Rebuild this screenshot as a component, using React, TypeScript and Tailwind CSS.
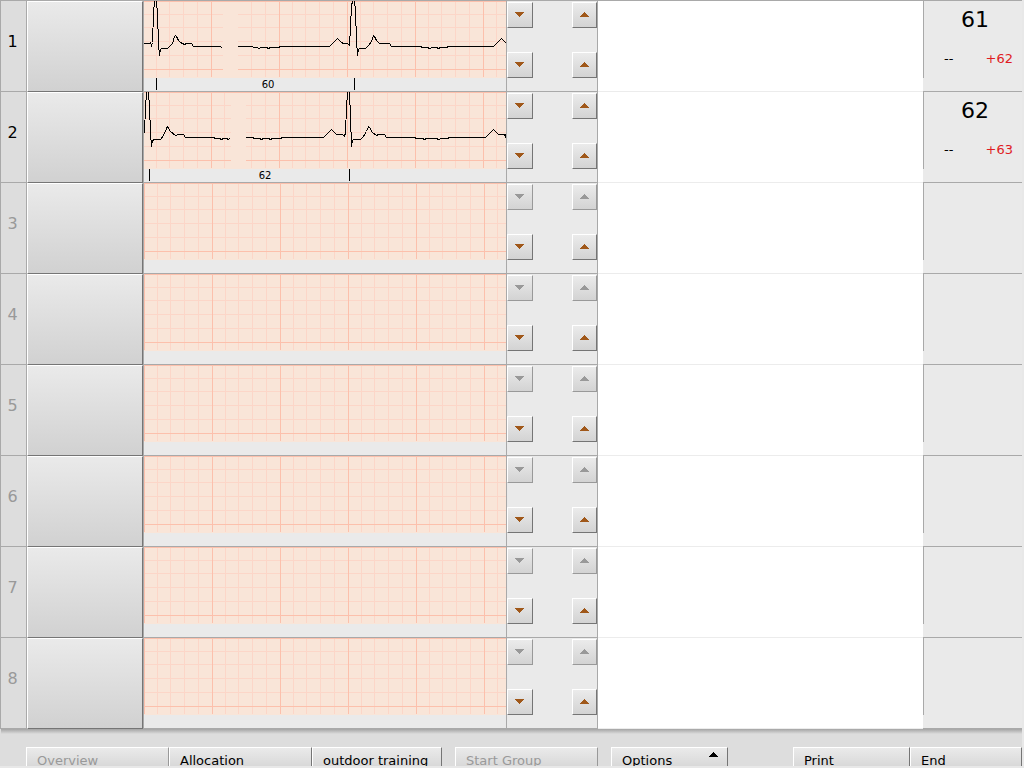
type Strip = {
  bpm: number;
  delta: string;
  rate: string;
  rateX: number;
  ticks: number[];
  gap: [number, number];
  trace: string;
};

type Channel = { id: number; strip?: Strip };

// Strip coordinates: 362 units wide, 90 high, one unit per pixel
const channels: Channel[] = [
  {
    id: 1,
    strip: {
      bpm: 61,
      delta: "+62",
      rate: "60",
      rateX: 124,
      ticks: [12, 210],
      gap: [79, 94],
      trace:
        "M0 42H5L6 41L7 44L8 41L9 12L10 0M12 0L13 12L14 42L15 54L16 48L17 47H23L25 45L28 42L30 35L31 34L32 35L34 39L36 41L40 43L42 42H47L49 45H76L77 46" +
        "M94 45H107L110 46H113L114 47L117 46H122L124 47L126 46H134L136 45H185L188 42L193 37L197 41L199 42H203L205 44L206 25L207 4L208 0M210 0L211 9L212 39L213 54L214 48L215 47H221L224 44L227 40L229 34L230 35L232 39L235 42H245L247 45H275L279 46H283L285 47L288 46H292L294 47L296 46H302L304 45H349L352 42L357 37L362 42",
    },
  },
  {
    id: 2,
    strip: {
      bpm: 62,
      delta: "+63",
      rate: "62",
      rateX: 121,
      ticks: [5, 205],
      gap: [87, 102],
      trace:
        "M0 40L1 15L2 0M4 0L5 15L6 40L7 54L8 48L10 47H16L19 43L23 34L26 39L31 43L34 42H39L41 45H69L71 46H75L77 47L79 46H82L84 47L85 46" +
        "M102 45H108L110 46H115L117 47L119 46H124L126 47L128 46H136L138 45H179L182 42L187 37L192 42H198L200 44L201 40L202 15L203 0M205 0L206 25L207 54L208 48L209 47H216L219 44L222 39L224 34L225 35L228 40L232 43L234 42H240L242 45H270L272 46H278L280 47L282 46H292L294 47L297 46H303L305 45H341L344 42L349 37L354 42H360L361 44L362 40",
    },
  },
  { id: 3 },
  { id: 4 },
  { id: 5 },
  { id: 6 },
  { id: 7 },
  { id: 8 },
];

const minorOffsets = [13, 26, 40, 54];
const majorColumns = [0, 68, 136, 204, 272, 340];

function Arrow({ up }: { up?: boolean }) {
  return (
    <svg width="9" height="5" viewBox="0 0 9 5" fill="currentColor" shapeRendering="crispEdges" aria-hidden="true">
      {up ? (
        <path d="M4 0h1v1h1v1h1v1h1v1h1v1H0V4h1V3h1V2h1V1h1z" />
      ) : (
        <path d="M0 0h9v1H8v1H7v1H6v1H5v1H4V4H3V3H2V2H1V1H0z" />
      )}
    </svg>
  );
}

function StepButton({ up, disabled, label }: { up?: boolean; disabled?: boolean; label: string }) {
  return (
    <button
      type="button"
      disabled={disabled}
      aria-label={label}
      className={`flex h-[26px] items-start border border-t-white border-l-white bg-linear-to-b from-[#ebebeb] to-[#d3d3d3] pt-[9px] pl-[7px] ${
        up ? "w-[25px]" : "w-[26px]"
      } ${
        disabled
          ? "border-r-[#999999] border-b-[#999999] text-[#999999]"
          : "border-r-[#757575] border-b-[#757575] text-[#a0581a]"
      }`}
    >
      <Arrow up={up} />
    </button>
  );
}

function EcgStrip({ strip }: { strip?: Strip }) {
  const shift = strip ? -1 : 0;
  const inGap = (x: number) => strip !== undefined && x >= strip.gap[0] && x < strip.gap[1];
  const minors = majorColumns
    .flatMap((x) => minorOffsets.map((o) => x + o + shift))
    .filter((x) => x < 362 && !inGap(x));
  const majors = majorColumns.map((x) => x + shift).filter((x) => x >= 0);

  return (
    <svg width="362" height="90" viewBox="0 0 362 90" shapeRendering="crispEdges" className="block">
      <rect width="362" height="77" fill="#f9e5d8" />
      {[13, 26, 40, 54].map((y) => (
        <rect key={y} y={y} width="362" height="1" fill="#fcd6c8" />
      ))}
      {minors.map((x) => (
        <rect key={x} x={x} width="1" height="76" fill="#fcd6c8" />
      ))}
      <rect y="68" width="362" height="1" fill="#fcc0ac" />
      {strip && <rect x={strip.gap[0]} width={strip.gap[1] - strip.gap[0]} height="77" fill="#f9e5d8" />}
      <rect width="362" height="1" fill="#fcc0ac" />
      {majors.map((x) => (
        <rect key={x} x={x} width="1" height="76" fill="#fcc0ac" />
      ))}
      {strip && (
        <>
          <g transform="translate(0.5 0.5)">
            <path d={strip.trace} fill="none" stroke="#000" strokeWidth="1" strokeLinecap="square" />
          </g>
          {strip.ticks.map((x) => (
            <rect key={x} x={x} y="77" width="1" height="12" fill="#000" />
          ))}
          <text x={strip.rateX} y="87" fontSize="10" textAnchor="middle" fill="#000">
            {strip.rate}
          </text>
        </>
      )}
    </svg>
  );
}

function ChannelRow({ id, strip }: Channel) {
  return (
    <li className="flex h-[91px]">
      <div
        className={`flex w-[26px] shrink-0 items-center justify-center border-r border-b border-[#a9a9a9] pr-[2px] pb-[9px] text-base ${
          strip ? "text-black" : "text-[#999999]"
        }`}
      >
        {id}
      </div>
      <button
        type="button"
        aria-label={`Channel ${id}`}
        className="w-[116px] shrink-0 border border-t-white border-r-[#757575] border-b-[#757575] border-l-white bg-linear-to-b from-[#eaeaea] to-[#d1d1d1]"
      />
      <div className="shrink-0 border-x border-b border-[#a9a9a9] bg-[#eaeaea]">
        <EcgStrip strip={strip} />
      </div>
      <div className="flex w-[91px] shrink-0 justify-between border-r border-b border-[#a9a9a9] bg-[#eaeaea] pt-px">
        <div className="flex flex-col gap-6">
          <StepButton disabled={!strip} label={`Lower upper limit ${id}`} />
          <StepButton label={`Lower lower limit ${id}`} />
        </div>
        <div className="flex flex-col gap-6">
          <StepButton up disabled={!strip} label={`Raise upper limit ${id}`} />
          <StepButton up label={`Raise lower limit ${id}`} />
        </div>
      </div>
      <div className="flex-1 border-b border-[#ececec] bg-white" />
      <div className="w-[99px] shrink-0 border-b border-[#a9a9a9] bg-[#eaeaea]">
        <div className="h-[77px] border-l border-[#a9a9a9] pt-[5px]">
          {strip && (
            <>
              <p className="pl-1 text-center text-[22px] leading-7">{strip.bpm}</p>
              <div className="mt-[15px] flex justify-between pr-[9px] pl-5 text-[13px] leading-5">
                <span>--</span>
                <span className="text-[#e01b24]">{strip.delta}</span>
              </div>
            </>
          )}
        </div>
      </div>
    </li>
  );
}

function MenuButton({
  label,
  width,
  disabled,
  popup,
}: {
  label: string;
  width: string;
  disabled?: boolean;
  popup?: boolean;
}) {
  return (
    <button
      type="button"
      disabled={disabled}
      className={`flex h-7 items-start justify-between border border-t-white border-l-white bg-linear-to-b from-[#eaeaea] to-[#d1d1d1] pt-[3px] pr-[9px] pl-[10px] text-[13px] leading-5 whitespace-nowrap ${width} ${
        disabled ? "border-r-[#999999] text-[#999999]" : "border-r-[#757575] text-black"
      }`}
    >
      {label}
      {popup && (
        <span className="pt-px">
          <Arrow up />
        </span>
      )}
    </button>
  );
}

export default function App() {
  return (
    <div className="flex h-screen flex-col overflow-hidden border-r-2 border-b-2 border-[#e8e8e8] bg-[#dddddd] font-['Verdana','DejaVu_Sans',sans-serif] text-black">
      <main className="shrink-0">
        <ul className="border-t border-l border-[#a9a9a9]">
          {channels.map((channel) => (
            <ChannelRow key={channel.id} {...channel} />
          ))}
        </ul>
        <div className="ml-px h-[5px] bg-linear-to-b from-[#a4a4a4] to-[#dddddd]" />
      </main>

      <footer className="flex pt-[13px] pl-[26px]">
        <MenuButton label="Overview" width="w-[143px]" disabled />
        <MenuButton label="Allocation" width="w-[143px]" />
        <MenuButton label="outdoor training" width="w-[130px]" />
        <div className="ml-[13px] flex">
          <MenuButton label="Start Group" width="w-[143px]" disabled />
        </div>
        <div className="ml-[13px] flex">
          <MenuButton label="Options" width="w-[117px]" popup />
        </div>
        <div className="ml-auto flex">
          <MenuButton label="Print" width="w-[117px]" />
          <MenuButton label="End" width="w-[112px]" />
        </div>
      </footer>
    </div>
  );
}
